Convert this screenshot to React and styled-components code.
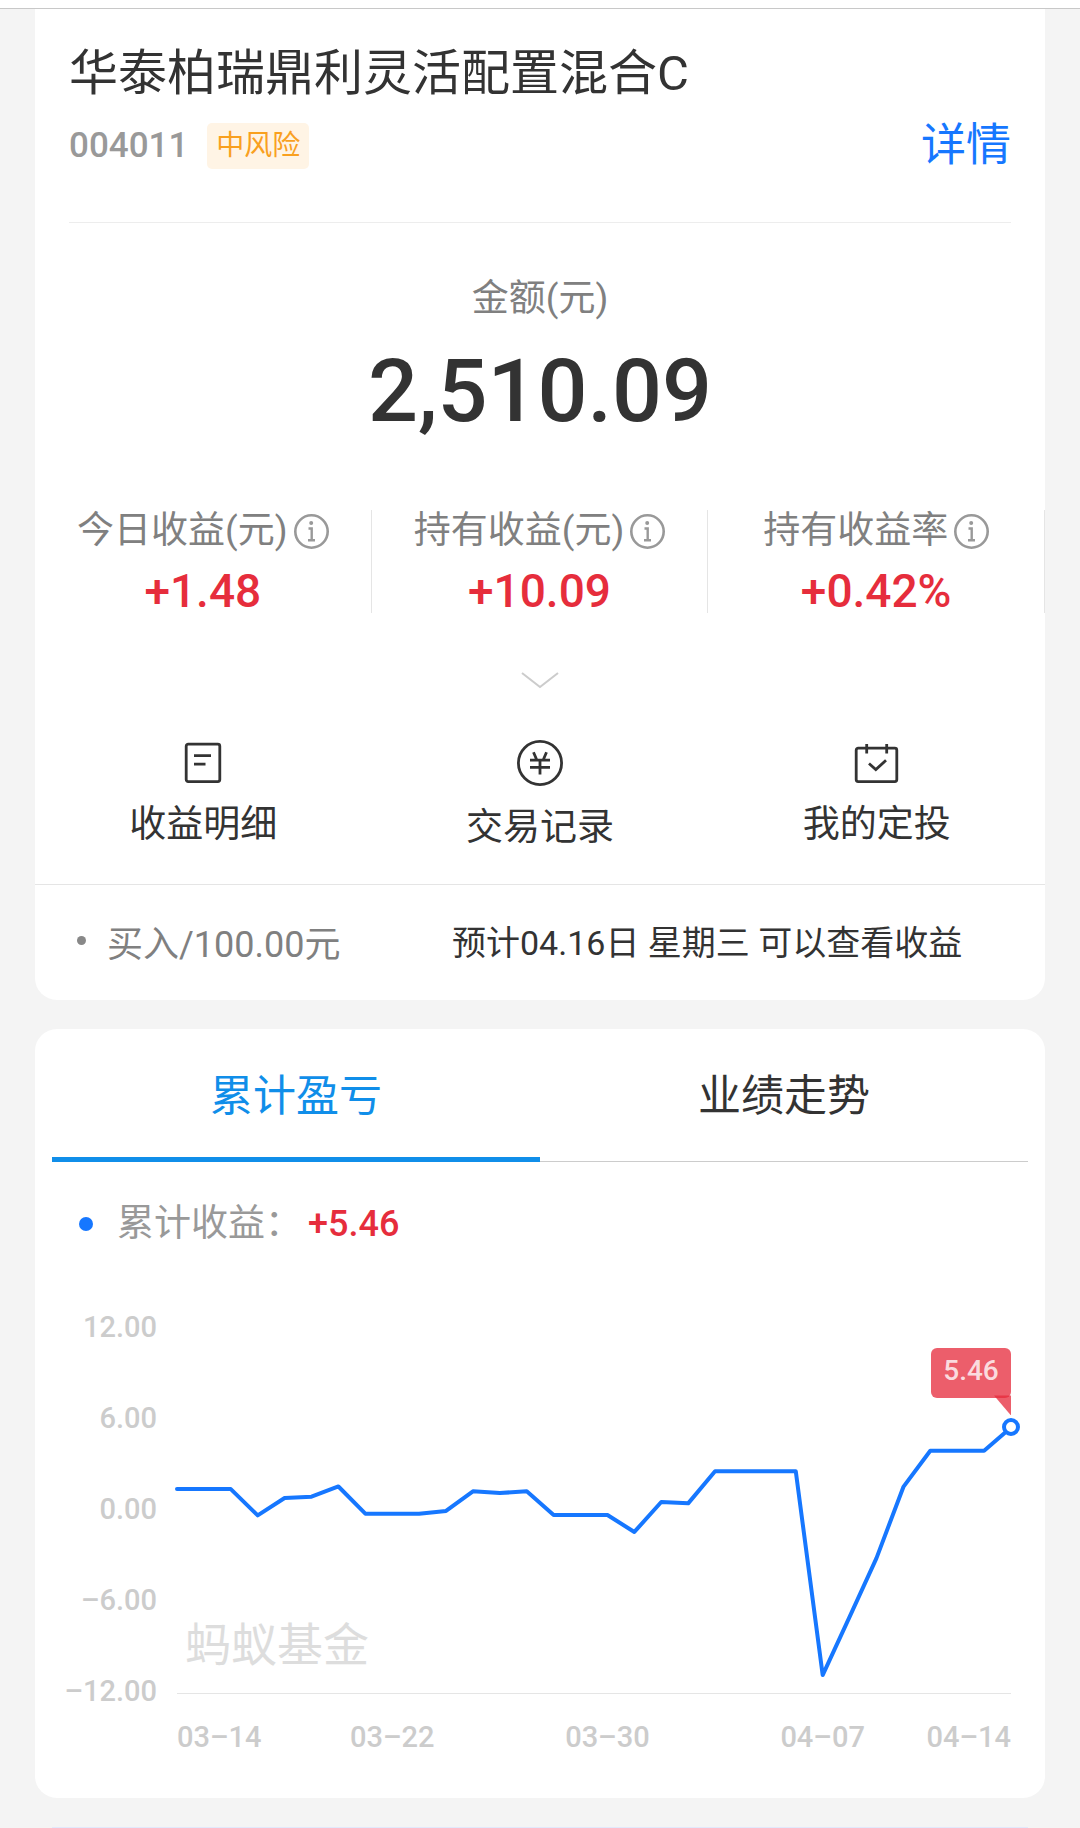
import styled, { createGlobalStyle } from "styled-components";

const GlobalStyle = createGlobalStyle`
	* {
		box-sizing: border-box;
	}

	body {
		margin: 0;
		background: #f4f4f4;
		color: #333;
		font-family: Roboto, "Noto Sans CJK SC", sans-serif;
	}

	button {
		padding: 0;
		border: 0;
		background: none;
		color: inherit;
		font: inherit;
		cursor: pointer;
	}
`;

const TopBar = styled.header`
	height: 9px;
	background: #fff;
	border-bottom: 1px solid #c8c8c8;
`;

const Page = styled.main`
	display: flex;
	flex-direction: column;
	gap: 29px;
`;

const Card = styled.section`
	margin: 0 35px;
	background: #fff;
	border-radius: ${(props) => (props.$flatTop ? "0 0 22px 22px" : "22px")};
`;

const FundHeader = styled.div`
	margin: 0 34px;
	padding: 35px 0 46px;
	border-bottom: 1px solid #ededed;
`;

const FundName = styled.h1`
	margin: 0;
	font-size: 49px;
	font-weight: 400;
	line-height: 60px;
`;

const FundMeta = styled.div`
	display: flex;
	align-items: center;
	margin-top: 12px;
	height: 60px;
`;

const FundCode = styled.span`
	color: #999;
	font-size: 35px;
	font-weight: 500;
	line-height: 46px;
`;

const RiskTag = styled.span`
	margin-left: 19px;
	padding: 0 9px;
	background: #fff4e5;
	border-radius: 5px;
	color: #f9a01f;
	font-size: 28px;
	line-height: 46px;
`;

const DetailLink = styled.a`
	margin-left: auto;
	color: #1677ff;
	font-size: 45px;
	line-height: 60px;
	text-decoration: none;
`;

const Amount = styled.div`
	padding-top: 52px;
	text-align: center;
`;

const AmountLabel = styled.div`
	color: #808080;
	font-size: 37px;
	line-height: 48px;
`;

const AmountValue = styled.div`
	margin-top: 18px;
	font-size: 88px;
	font-weight: 500;
	line-height: 100px;
`;

const Stats = styled.div`
	display: grid;
	grid-template-columns: repeat(3, 1fr);
	margin-top: 69px;
`;

const Stat = styled.div`
	height: 103px;
	border-right: 1px solid #e5e5e5;
	text-align: center;
`;

const StatLabel = styled.div`
	display: flex;
	align-items: center;
	justify-content: center;
	gap: 6px;
	height: 42px;
	color: #808080;
	font-size: 37px;
	line-height: 42px;
`;

const InfoButton = styled.button`
	display: flex;
`;

const StatValue = styled.div`
	margin-top: 12px;
	color: #e62d3c;
	font-size: 46px;
	font-weight: 500;
	line-height: 54px;
`;

const ExpandButton = styled.button`
	display: block;
	margin: 58px auto 0;
	height: 20px;

	svg {
		display: block;
	}
`;

const Actions = styled.nav`
	display: grid;
	grid-template-columns: repeat(3, 1fr);
	margin-top: 49px;
	height: 144px;
`;

const Action = styled.button`
	display: flex;
	flex-direction: column;
	align-items: center;
	justify-content: flex-start;
	gap: 18px;
	font-size: 37px;
	line-height: 48px;
`;

const Pending = styled.div`
	display: flex;
	align-items: center;
	height: 116px;
	padding: 0 42px 4px;
	border-top: 1px solid #e5e5e5;
`;

const Dot = styled.i`
	flex: none;
	width: ${(props) => props.$size}px;
	height: ${(props) => props.$size}px;
	border-radius: 50%;
	background: ${(props) => props.$color};
`;

const PendingAmount = styled.span`
	width: 345px;
	margin-left: 21px;
	color: #808080;
	font-size: 36px;
`;

const PendingNote = styled.span`
	font-size: 34px;
	white-space: nowrap;
`;

const Tabs = styled.div`
	display: grid;
	grid-template-columns: 1fr 1fr;
	margin: 0 17px;
	box-shadow: inset 0 -1px 0 #ccc;
`;

const Tab = styled.button`
	height: 133px;
	padding-bottom: 7px;
	font-size: 43px;

	&[aria-selected="true"] {
		color: #108ee9;
		box-shadow: inset 0 -5px 0 #108ee9;
	}
`;

const Legend = styled.div`
	display: flex;
	align-items: center;
	gap: 24px;
	padding: 37px 44px 0;
	color: #999;
	font-size: 37px;
	line-height: 50px;
`;

const LegendText = styled.div`
	display: flex;
	align-items: center;
	gap: 6px;
`;

const LegendValue = styled.span`
	color: #e62d3c;
	font-size: 36px;
	font-weight: 500;
`;

const Chart = styled.div`
	display: grid;
	grid-template-columns: 122px minmax(0, 1fr);
	column-gap: 20px;
	margin-top: 63px;
	padding: 0 34px 46px 0;
	color: #ccc;
	font-size: 29px;
	font-weight: 500;
	line-height: 30px;
`;

const YAxis = styled.div`
	display: flex;
	flex-direction: column;
	justify-content: space-between;
	height: 394px;
	text-align: right;
`;

const Plot = styled.div`
	position: relative;
	height: 366px;
	margin-top: 16px;
	border-bottom: 1px solid #e5e5e5;
`;

const Line = styled.svg`
	display: block;
	width: 100%;
	height: 365px;
	overflow: visible;
`;

const Watermark = styled.span`
	position: absolute;
	left: 8px;
	bottom: 18px;
	color: #ddd;
	font-size: 46px;
	font-weight: 400;
	line-height: 60px;
`;

const Marker = styled.i`
	position: absolute;
	width: 18px;
	height: 18px;
	margin: -9px;
	border: 4px solid #1677ff;
	border-radius: 50%;
	background: #fff;
`;

const Bubble = styled.div`
	position: absolute;
	right: 0;
	width: 80px;
	height: 50px;
	margin-top: -79px;
	background: rgba(230, 44, 60, 0.76);
	border-radius: 6px;
	color: rgba(255, 255, 255, 0.8);
	font-size: 28px;
	line-height: 46px;
	text-align: center;

	&::after {
		content: "";
		position: absolute;
		right: 0;
		top: 47px;
		width: 17px;
		height: 20px;
		background: rgba(230, 44, 60, 0.76);
		clip-path: polygon(0 0, 100% 0, 100% 100%);
	}
`;

const XAxis = styled.div`
	grid-column: 2;
	display: grid;
	grid-template-columns: repeat(31, minmax(0, 1fr));
	margin-top: 16px;
`;

const XLabel = styled.span`
	grid-column: ${(props) => props.$span};
	justify-self: ${(props) => props.$align || "center"};
	white-space: nowrap;
`;

const NextCard = styled.section`
	height: 1px;
	margin: 0 52px;
	background: #e1e9fc;
`;

// one value per day, 03-14 to 04-14
const PROFIT = [
	1.41, 1.41, 1.41, -0.32, 0.82, 0.91, 1.58, -0.21, -0.21, -0.21, -0.03, 1.26,
	1.15, 1.26, -0.3, -0.3, -0.3, -1.41, 0.56, 0.47, 2.58, 2.58, 2.58, 2.58,
	-10.82, -7, -3.13, 1.55, 3.93, 3.93, 3.93, 5.46,
];

const MAX = 12;

const X_LABELS = [
	{ text: "03–14", span: "1 / 5", align: "start" },
	{ text: "03–22", span: "6 / 12" },
	{ text: "03–30", span: "14 / 20" },
	{ text: "04–07", span: "22 / 28" },
	{ text: "04–14", span: "28 / 32", align: "end" },
];

const STATS = [
	{ label: "今日收益(元)", value: "+1.48" },
	{ label: "持有收益(元)", value: "+10.09" },
	{ label: "持有收益率", value: "+0.42%" },
];

function InfoIcon() {
	return (
		<svg width="35" height="35" viewBox="0 0 35 35" fill="none" stroke="#999">
			<circle cx="17.5" cy="17.5" r="16.2" strokeWidth="2.6" />
			<circle cx="17.2" cy="9" r="2" fill="#999" stroke="none" />
			<path d="M14.5 14.5h3.2v11.8M14 26.3h7" strokeWidth="2.4" />
		</svg>
	);
}

function ListIcon() {
	return (
		<svg width="46" height="43" viewBox="0 0 46 43" fill="none" stroke="#333" strokeWidth="2.8">
			<rect x="6.2" y="4.2" width="33.6" height="37.4" rx="2" />
			<path d="M14 15.7h17M14 24.2h11.5" />
		</svg>
	);
}

function YuanIcon() {
	return (
		<svg width="46" height="46" viewBox="0 0 46 46" fill="none" stroke="#333" strokeWidth="2.8">
			<circle cx="23" cy="23" r="21.6" />
			<path d="M16.5 12.3l3.2 7.4M29.5 12.3l-3.2 7.4M13 20.2h20M13 27.3h20M23 20v14.5" />
		</svg>
	);
}

function CalendarIcon() {
	return (
		<svg width="46" height="43" viewBox="0 0 46 43" fill="none" stroke="#333" strokeWidth="2.8">
			<rect x="2.2" y="8.2" width="40.6" height="33.4" rx="2" />
			<path d="M12.7 4v9.5M32.7 4v9.5M15 23.5l6.8 6L32 20.3" />
		</svg>
	);
}

function ProfitChart() {
	const last = PROFIT[PROFIT.length - 1];
	const points = PROFIT.map((value, i) => `${i},${MAX - value}`).join(" ");
	const lastTop = ((MAX - last) / (MAX * 2)) * 100;

	return (
		<Chart>
			<YAxis>
				<span>12.00</span>
				<span>6.00</span>
				<span>0.00</span>
				<span>–6.00</span>
				<span>–12.00</span>
			</YAxis>
			<Plot>
				<Watermark>蚂蚁基金</Watermark>
				<Line viewBox="0 0 31 24" preserveAspectRatio="none">
					<polyline
						points={points}
						fill="none"
						stroke="#1677ff"
						strokeWidth="4"
						strokeLinecap="round"
						strokeLinejoin="round"
						vectorEffect="non-scaling-stroke"
					/>
				</Line>
				<Bubble style={{ top: `${lastTop}%` }}>{last}</Bubble>
				<Marker style={{ top: `${lastTop}%`, left: "100%" }} />
			</Plot>
			<XAxis>
				{X_LABELS.map(({ text, span, align }) => (
					<XLabel key={text} $span={span} $align={align}>
						{text}
					</XLabel>
				))}
			</XAxis>
		</Chart>
	);
}

export default function App() {
	return (
		<>
			<GlobalStyle />
			<TopBar />
			<Page>
				<Card $flatTop>
					<FundHeader>
						<FundName>华泰柏瑞鼎利灵活配置混合C</FundName>
						<FundMeta>
							<FundCode>004011</FundCode>
							<RiskTag>中风险</RiskTag>
							<DetailLink href="#detail">详情</DetailLink>
						</FundMeta>
					</FundHeader>
					<Amount>
						<AmountLabel>金额(元)</AmountLabel>
						<AmountValue>2,510.09</AmountValue>
					</Amount>
					<Stats>
						{STATS.map(({ label, value }) => (
							<Stat key={label}>
								<StatLabel>
									{label}
									<InfoButton aria-label={`${label}说明`}>
										<InfoIcon />
									</InfoButton>
								</StatLabel>
								<StatValue>{value}</StatValue>
							</Stat>
						))}
					</Stats>
					<ExpandButton aria-label="展开">
						<svg width="38" height="20" viewBox="0 0 38 20" fill="none" stroke="#ccc" strokeWidth="2">
							<path d="M1 2l18 14L37 2" />
						</svg>
					</ExpandButton>
					<Actions>
						<Action>
							<ListIcon />
							收益明细
						</Action>
						<Action>
							<YuanIcon />
							交易记录
						</Action>
						<Action>
							<CalendarIcon />
							我的定投
						</Action>
					</Actions>
					<Pending>
						<Dot $size={9} $color="#888" />
						<PendingAmount>买入/100.00元</PendingAmount>
						<PendingNote>预计04.16日 星期三 可以查看收益</PendingNote>
					</Pending>
				</Card>
				<Card>
					<Tabs role="tablist">
						<Tab role="tab" aria-selected="true">
							累计盈亏
						</Tab>
						<Tab role="tab" aria-selected="false">
							业绩走势
						</Tab>
					</Tabs>
					<Legend>
						<Dot $size={14} $color="#1677ff" />
						<LegendText>
							累计收益：
							<LegendValue>+5.46</LegendValue>
						</LegendText>
					</Legend>
					<ProfitChart />
				</Card>
				<NextCard />
			</Page>
		</>
	);
}
